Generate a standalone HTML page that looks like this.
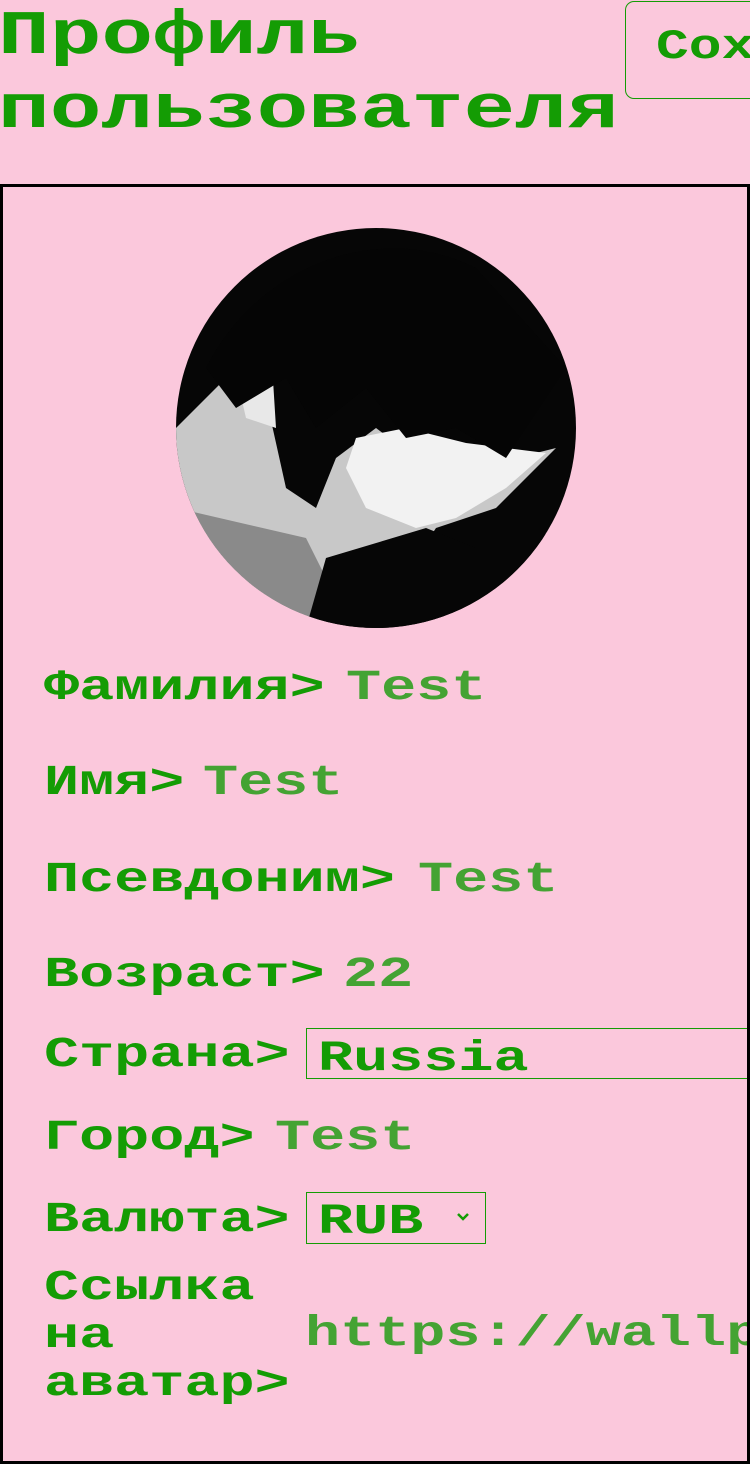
<!DOCTYPE html>
<html><head><meta charset="utf-8"><style>
html,body{margin:0;padding:0;background:#fbc8dc}
#w{position:relative;width:750px;height:1464px;overflow:hidden;background:#fbc8dc;font-family:"Liberation Mono",monospace;font-weight:bold;color:#149c04}
.s{position:absolute;white-space:nowrap;line-height:1;transform-origin:0 0}
.t{left:-2px;font-size:62px;transform:scaleX(1.39)}
.btn{position:absolute;left:625px;top:1px;width:140px;height:98px;border:1.5px solid #149c04;border-radius:9px;box-sizing:border-box}
.bt{left:656px;top:26px;font-size:42px;transform:scaleX(1.3)}
.card{position:absolute;left:0;top:184px;width:750px;height:1280px;border:3px solid #000;box-sizing:border-box}
.r{font-size:43px;transform:scaleX(1.36)}
.v{color:#44a333}
.box{position:absolute;border:1.5px solid #149c04;box-sizing:border-box}
</style></head><body><div id="w">
<div class="s t" style="top:6px">Профиль</div>
<div class="s t" style="top:80px">пользователя</div>
<div class="btn"></div>
<div class="s bt">Сох</div>
<svg style="position:absolute;left:176px;top:228px" width="400" height="400" viewBox="0 0 400 400">
<defs><clipPath id="c"><circle cx="200" cy="200" r="200"/></clipPath></defs>
<g clip-path="url(#c)">
<rect width="400" height="400" fill="#060606"/>
<path d="M0 200 L60 140 L90 170 L110 260 L140 280 L160 230 L200 200 L240 230 L290 220 L340 230 L380 220 L320 280 L260 300 L240 330 L160 330 L140 400 L0 400Z" fill="#c8c8c8"/>
<path d="M180 210 L230 200 L290 215 L370 225 L330 260 L280 290 L240 300 L190 280 L170 240Z" fill="#f2f2f2"/>
<path d="M0 280 L130 310 L150 350 L130 400 L0 400Z" fill="#8a8a8a"/>
<path d="M55 125 L95 120 L100 200 L70 190Z" fill="#e8e8e8"/>
<path d="M150 330 L250 300 L300 320 L400 300 L400 400 L130 400Z" fill="#060606"/>
<path d="M30 140 C80 40 200 -10 300 40 L390 140 L330 230 L280 200 L230 210 L190 160 L140 200 L110 150 L60 180Z" fill="#050505"/>
</g></svg>
<div class="s r" style="left:44px;top:666px">Фамилия&gt;</div><div class="s r v" style="left:346px;top:666px">Test</div>
<div class="s r" style="left:44px;top:761px">Имя&gt;</div><div class="s r v" style="left:203px;top:761px">Test</div>
<div class="s r" style="left:44px;top:858px">Псевдоним&gt;</div><div class="s r v" style="left:418px;top:858px">Test</div>
<div class="s r" style="left:44px;top:953px">Возраст&gt;</div><div class="s r v" style="left:343px;top:953px">22</div>
<div class="s r" style="left:44px;top:1033px">Страна&gt;</div>
<div class="box" style="left:306px;top:1028px;width:450px;height:51px"></div>
<div class="s r" style="left:318px;top:1037px">Russia</div>
<div class="s r" style="left:44px;top:1116px">Город&gt;</div><div class="s r v" style="left:275px;top:1116px">Test</div>
<div class="s r" style="left:44px;top:1198px">Валюта&gt;</div>
<div class="box" style="left:306px;top:1192px;width:180px;height:52px"></div>
<div class="s r" style="left:318px;top:1200px">RUB</div>
<svg style="position:absolute;left:456px;top:1212px" width="14" height="10"><path d="M2 2 L7 7 L12 2" stroke="#149c04" stroke-width="2.5" fill="none"/></svg>
<div class="s r" style="left:44px;top:1266px">Ссылка</div>
<div class="s r" style="left:44px;top:1314px">на</div>
<div class="s r" style="left:44px;top:1362px">аватар&gt;</div>
<div class="s r v" style="left:305px;top:1312px;width:325px;overflow:hidden">https://wallp</div>
<div class="card"></div>
</div></body></html>
